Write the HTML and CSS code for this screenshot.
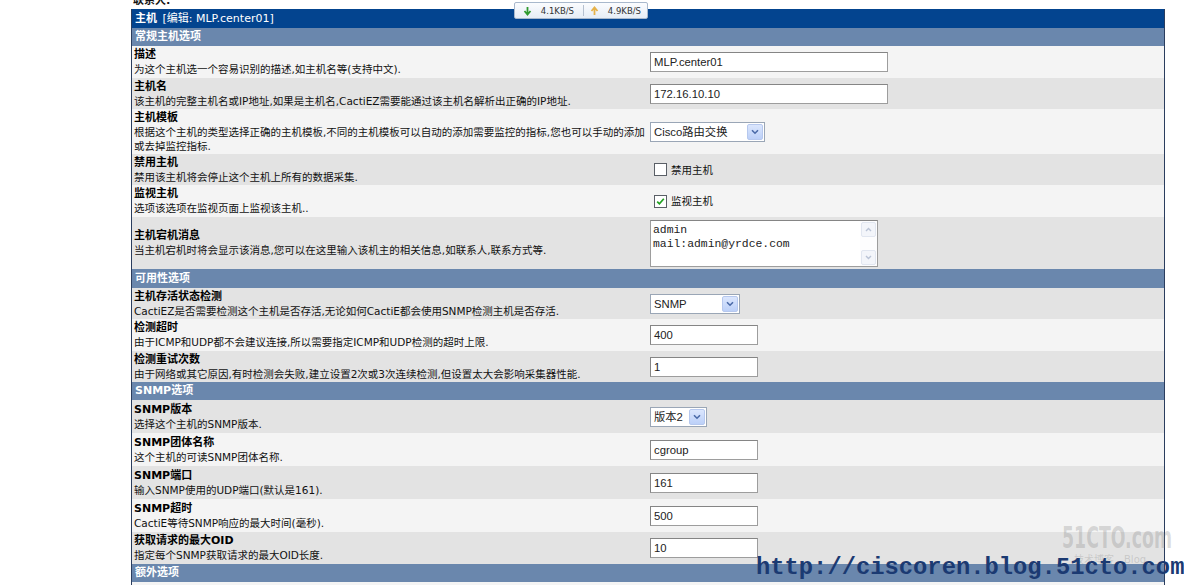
FILE: index.html
```html
<!DOCTYPE html>
<html lang="zh-CN">
<head>
<meta charset="utf-8">
<title>主机 [编辑: MLP.center01]</title>
<link rel="stylesheet" href="styles.css">
</head>
<body>
<div class="page">
  <div class="contact"><span>联系人:</span></div>

  <div class="traffic">
    <svg class="arr" width="9" height="10" viewBox="0 0 9 10"><path d="M4.5 1 V8 M1.5 5 L4.5 8.5 L7.5 5" fill="none" stroke="#2f9a2f" stroke-width="1.8"/></svg>
    <span class="rate">4.1KB/S</span>
    <span class="sep"></span>
    <svg class="arr" width="9" height="10" viewBox="0 0 9 10"><path d="M4.5 9 V2 M1.5 5 L4.5 1.5 L7.5 5" fill="none" stroke="#e6b24a" stroke-width="1.8"/></svg>
    <span class="rate">4.9KB/S</span>
  </div>

  <div class="form">
    <div class="hdr"><b>主机</b> [编辑: MLP.center01]</div>
    <div class="sec">常规主机选项</div>

    <div class="row light h32">
      <div class="lbl"><div class="t">描述</div><div class="d">为这个主机选一个容易识别的描述,如主机名等(支持中文).</div></div>
      <div class="ctl"><div class="txt w238">MLP.center01</div></div>
    </div>
    <div class="row dark">
      <div class="lbl"><div class="t">主机名</div><div class="d">该主机的完整主机名或IP地址,如果是主机名,CactiEZ需要能通过该主机名解析出正确的IP地址.</div></div>
      <div class="ctl"><div class="txt w238">172.16.10.10</div></div>
    </div>
    <div class="row light h45">
      <div class="lbl"><div class="t">主机模板</div><div class="d l2">根据这个主机的类型选择正确的主机模板,不同的主机模板可以自动的添加需要监控的指标,您也可以手动的添加<br>或去掉监控指标.</div></div>
      <div class="ctl"><div class="sel w115"><span class="v">Cisco路由交换</span><span class="b"><svg width="8" height="6" viewBox="0 0 8 6"><path d="M1 1.2 L4 4.2 L7 1.2" fill="none" stroke="#4a6aa8" stroke-width="1.6"/></svg></span></div></div>
    </div>
    <div class="row dark">
      <div class="lbl"><div class="t">禁用主机</div><div class="d">禁用该主机将会停止这个主机上所有的数据采集.</div></div>
      <div class="ctl"><label class="chk"><span class="cb"></span>禁用主机</label></div>
    </div>
    <div class="row light h32">
      <div class="lbl"><div class="t">监视主机</div><div class="d">选项该选项在监视页面上监视该主机..</div></div>
      <div class="ctl"><label class="chk"><span class="cb"><svg width="11" height="11" viewBox="0 0 11 11"><path d="M2.2 5.6 L4.4 7.8 L8.8 2.8" fill="none" stroke="#21a121" stroke-width="1.7"/></svg></span>监视主机</label></div>
    </div>
    <div class="row dark h52">
      <div class="lbl"><div class="t">主机宕机消息</div><div class="d">当主机宕机时将会显示该消息,您可以在这里输入该机主的相关信息,如联系人,联系方式等.</div></div>
      <div class="ctl">
        <div class="ta">
          <div class="ta-text">admin<br>mail:admin@yrdce.com</div>
          <div class="sb">
            <span class="sbb"><svg width="7" height="5" viewBox="0 0 7 5"><path d="M1 4 L3.5 1.5 L6 4" fill="none" stroke="#b9c3d6" stroke-width="1.4"/></svg></span>
            <span class="sbb"><svg width="7" height="5" viewBox="0 0 7 5"><path d="M1 1 L3.5 3.5 L6 1" fill="none" stroke="#b9c3d6" stroke-width="1.4"/></svg></span>
          </div>
        </div>
      </div>
    </div>

    <div class="sec s19">可用性选项</div>
    <div class="row dark">
      <div class="lbl"><div class="t">主机存活状态检测</div><div class="d">CactiEZ是否需要检测这个主机是否存活,无论如何CactiE都会使用SNMP检测主机是否存活.</div></div>
      <div class="ctl"><div class="sel w90"><span class="v">SNMP</span><span class="b"><svg width="8" height="6" viewBox="0 0 8 6"><path d="M1 1.2 L4 4.2 L7 1.2" fill="none" stroke="#4a6aa8" stroke-width="1.6"/></svg></span></div></div>
    </div>
    <div class="row light h32">
      <div class="lbl"><div class="t">检测超时</div><div class="d">由于ICMP和UDP都不会建议连接,所以需要指定ICMP和UDP检测的超时上限.</div></div>
      <div class="ctl"><div class="txt w108">400</div></div>
    </div>
    <div class="row dark">
      <div class="lbl"><div class="t">检测重试次数</div><div class="d">由于网络或其它原因,有时检测会失败,建立设置2次或3次连续检测,但设置太大会影响采集器性能.</div></div>
      <div class="ctl"><div class="txt w108">1</div></div>
    </div>

    <div class="sec">SNMP选项</div>
    <div class="row dark h33">
      <div class="lbl"><div class="t">SNMP版本</div><div class="d">选择这个主机的SNMP版本.</div></div>
      <div class="ctl"><div class="sel w57"><span class="v">版本2</span><span class="b"><svg width="8" height="6" viewBox="0 0 8 6"><path d="M1 1.2 L4 4.2 L7 1.2" fill="none" stroke="#4a6aa8" stroke-width="1.6"/></svg></span></div></div>
    </div>
    <div class="row light h33">
      <div class="lbl"><div class="t">SNMP团体名称</div><div class="d">这个主机的可读SNMP团体名称.</div></div>
      <div class="ctl"><div class="txt w108">cgroup</div></div>
    </div>
    <div class="row dark h33">
      <div class="lbl"><div class="t">SNMP端口</div><div class="d">输入SNMP使用的UDP端口(默认是161).</div></div>
      <div class="ctl"><div class="txt w108">161</div></div>
    </div>
    <div class="row light h33">
      <div class="lbl"><div class="t">SNMP超时</div><div class="d">CactiE等待SNMP响应的最大时间(毫秒).</div></div>
      <div class="ctl"><div class="txt w108">500</div></div>
    </div>
    <div class="row dark h32">
      <div class="lbl"><div class="t">获取请求的最大OID</div><div class="d">指定每个SNMP获取请求的最大OID长度.</div></div>
      <div class="ctl"><div class="txt w108">10</div></div>
    </div>

    <div class="sec">额外选项</div>
    <div class="row light h32"><div class="lbl"></div><div class="ctl"></div></div>
  </div>

  <div class="wm-logo"><div class="wm-big">51CTO.com</div><div class="wm-small">技术博客　Blog</div></div>
  <div class="wm-url">http://ciscoren.blog.51cto.com</div>
</div>
</body>
</html>
```

FILE: styles.css
```css
* { box-sizing: border-box; }

html, body {
  margin: 0;
  padding: 0;
  background: #ffffff;
  overflow: hidden;
}

body {
  font-family: "DejaVu Sans", "Noto Sans CJK SC", sans-serif;
  font-size: 10.5px;
  color: #111;
}

.page {
  position: relative;
  width: 1184px;
  height: 585px;
  overflow: hidden;
}

.contact {
  height: 9px;
  overflow: hidden;
  margin-left: 133px;
}
.contact span {
  display: block;
  margin-top: -6px;
  height: 14px;
  line-height: 14px;
  font-size: 11px;
  font-weight: bold;
}

/* traffic meter overlay */
.traffic {
  position: absolute;
  left: 514px;
  top: 2px;
  width: 134px;
  height: 17px;
  display: flex;
  align-items: center;
  gap: 6px;
  padding: 0 6px 0 8px;
  background: linear-gradient(#fbfcfe, #e6edf6);
  border: 1px solid #a8b8cc;
  border-radius: 2px;
  font-size: 8.5px;
  color: #333;
}
.traffic .rate { width: 36px; text-align: right; }
.traffic .sep {
  width: 1px;
  height: 11px;
  background: #b5c0cf;
  margin: 0 0 0 3px;
}

/* form table */
.form {
  margin-left: 131px;
  width: 1034px;
  border-left: 1px solid #2a3d5e;
  border-right: 1px solid #2a3d5e;
}

.hdr {
  height: 19px;
  line-height: 19px;
  background: #03448f;
  color: #fff;
  padding-left: 3px;
  font-size: 11px;
  overflow: hidden;
}
.hdr b { margin-right: 2px; }

.sec {
  height: 18px;
  line-height: 18px;
  background: #6a87ad;
  color: #fff;
  font-weight: bold;
  font-size: 11px;
  padding-left: 3px;
  overflow: hidden;
}
.sec.s19 { height: 19px; line-height: 19px; }

.row {
  display: grid;
  grid-template-columns: 514px 1fr;
  align-items: center;
  height: 31px;
}
.row.h32 { height: 32px; }
.row.h33 { height: 33px; }
.row.h45 { height: 45px; }
.row.h52 { height: 52px; }
.light { background: #f4f4f4; }
.dark { background: #e3e3e3; }

.lbl { padding: 0 2px; }
.t {
  font-weight: bold;
  font-size: 11px;
  height: 14px;
  line-height: 14px;
  color: #000;
  white-space: nowrap;
}
.d {
  height: 14px;
  line-height: 14px;
  color: #111;
  white-space: nowrap;
}
.d.l2 { height: 28px; }

.ctl {
  padding-left: 4px;
  display: flex;
  align-items: center;
}

/* controls */
.txt {
  height: 20px;
  line-height: 18px;
  background: #fff;
  border: 1px solid #9d9d9d;
  border-top-color: #858585;
  border-left-color: #858585;
  padding: 0 3px;
  font-family: "Liberation Sans", "Noto Sans CJK SC", sans-serif;
  font-size: 11.3px;
  color: #222;
}
.w238 { width: 238px; }
.w108 { width: 108px; }
.w115 { width: 115px; }
.w90 { width: 90px; }
.w57 { width: 57px; }

.sel {
  height: 20px;
  display: flex;
  align-items: center;
  background: #fff;
  border: 1px solid #9aa6b6;
  font-family: "Liberation Sans", "Noto Sans CJK SC", sans-serif;
  font-size: 11.3px;
  color: #222;
}
.sel .v {
  flex: 1;
  padding-left: 3px;
  white-space: nowrap;
  line-height: 18px;
  height: 18px;
}
.sel .b {
  width: 16px;
  height: 16px;
  margin-right: 1px;
  display: flex;
  align-items: center;
  justify-content: center;
  background: linear-gradient(#dbe6fd, #bcd0f8);
  border: 1px solid #b6c8ee;
  border-radius: 2px;
}

.chk {
  display: flex;
  align-items: center;
  gap: 4px;
  height: 14px;
  line-height: 14px;
  font-size: 10.5px;
  color: #111;
  padding-left: 4px;
}
.cb {
  width: 13px;
  height: 13px;
  border: 1px solid #5a5f66;
  background: #fff;
  display: flex;
  align-items: center;
  justify-content: center;
}

.ta {
  width: 228px;
  height: 47px;
  display: flex;
  background: #fff;
  border: 1px solid #9d9d9d;
  border-top-color: #858585;
}
.ta-text {
  flex: 1;
  padding: 2px 2px;
  font-family: "Liberation Mono", monospace;
  font-size: 11.4px;
  line-height: 14px;
  color: #222;
}
.sb {
  width: 17px;
  display: flex;
  flex-direction: column;
  justify-content: space-between;
  padding: 1px;
  background: #fdfdfe;
}
.sbb {
  height: 15px;
  display: flex;
  align-items: center;
  justify-content: center;
  background: #f3f5fa;
  border: 1px solid #e1e6f0;
  border-radius: 2px;
}

/* watermarks over the screenshot */
.wm-logo {
  position: absolute;
  left: 1062px;
  top: 523px;
  width: 112px;
  color: rgba(120, 120, 120, 0.26);
}
.wm-big {
  font-family: "DejaVu Sans", sans-serif;
  font-weight: bold;
  font-size: 31px;
  line-height: 31px;
  transform: scale(0.56, 0.95);
  transform-origin: left center;
  white-space: nowrap;
}
.wm-small {
  font-size: 10px;
  line-height: 12px;
  padding-left: 12px;
  white-space: nowrap;
}

.wm-url {
  position: absolute;
  left: 756px;
  top: 553px;
  font-family: "Liberation Mono", monospace;
  font-weight: bold;
  font-size: 23.8px;
  line-height: 30px;
  color: #1b3a72;
  white-space: nowrap;
}
```
